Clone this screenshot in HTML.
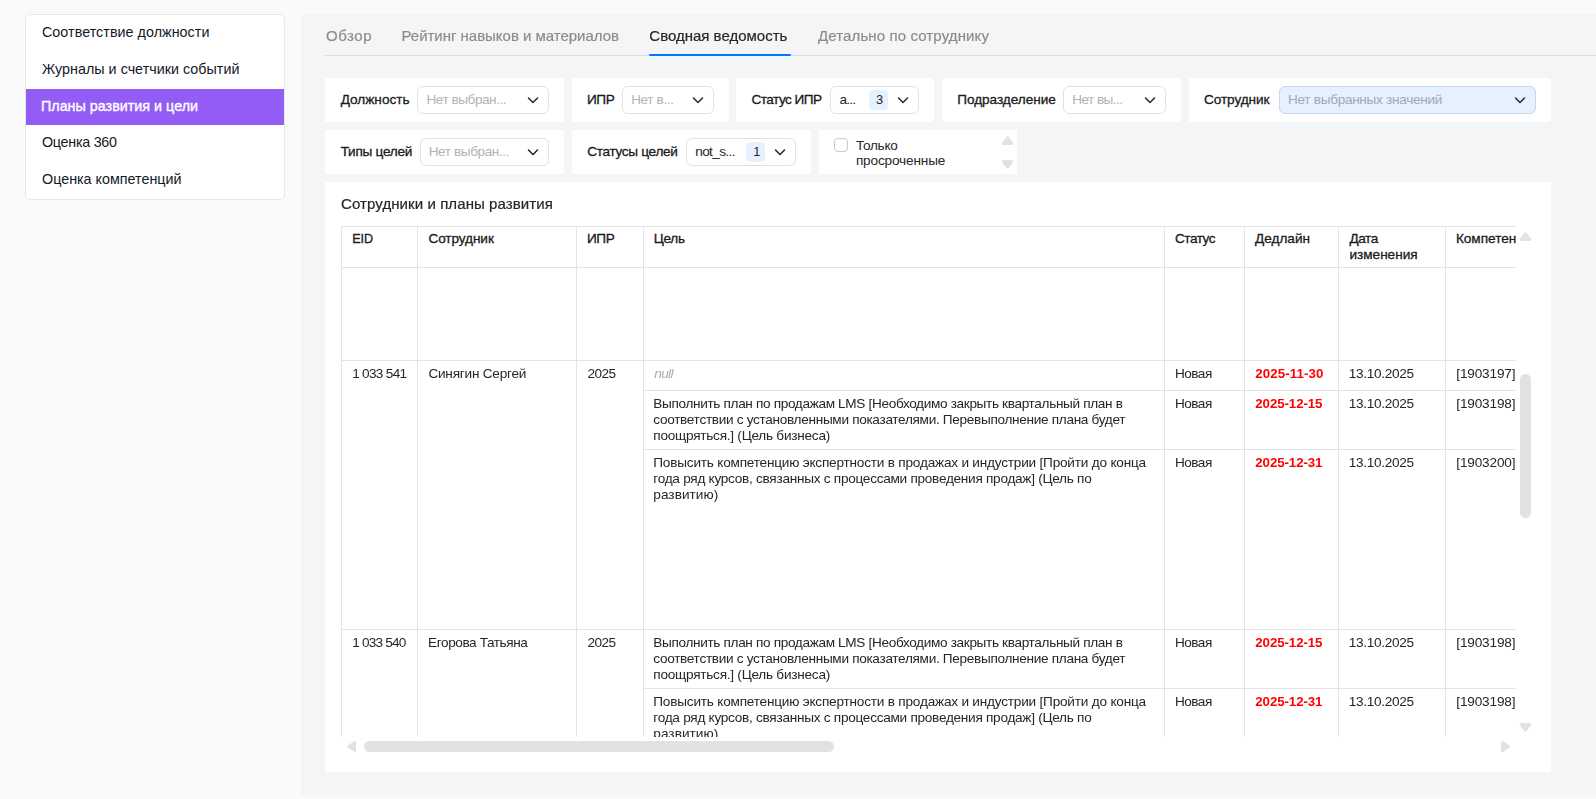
<!DOCTYPE html>
<html lang="ru">
<head>
<meta charset="utf-8">
<title>Планы развития и цели</title>
<style>
html,body{margin:0;padding:0;}
body{width:1596px;height:799px;overflow:hidden;background:#f9fafb;position:relative;font-family:"Liberation Sans",sans-serif;}
.b{position:absolute;box-sizing:border-box;display:block;}
.t{position:absolute;white-space:nowrap;line-height:20px;height:20px;}
.g{position:absolute;left:0;top:0;width:1596px;height:799px;will-change:transform;}
</style>
</head>
<body>
<div class="b" style="left:0px;top:0px;width:1px;height:799px;background:#ffffff;"></div>
<div class="b" style="left:1px;top:0px;width:1px;height:799px;background:#f5f6f8;"></div>
<div class="b" style="left:301px;top:14px;width:1295px;height:781px;background:#f4f5f7;"></div>
<div class="b" style="left:25px;top:14px;width:260px;height:186px;background:#fff;border:1px solid #e5e7eb;border-radius:5px;"></div>
<div class="b" style="left:26px;top:89px;width:258px;height:35.7px;background:#935cf5;"></div>
<div class="b" style="left:325px;top:55px;width:1271px;height:1px;background:#dcdddf;"></div>
<div class="b" style="left:649px;top:54px;width:142px;height:2px;background:#0077ff;border-radius:1px;"></div>
<div class="b" style="left:325px;top:78px;width:239px;height:44px;background:#fff;border-radius:3px;"></div>
<div class="b" style="left:572px;top:78px;width:156.5px;height:44px;background:#fff;border-radius:3px;"></div>
<div class="b" style="left:735.5px;top:78px;width:198px;height:44px;background:#fff;border-radius:3px;"></div>
<div class="b" style="left:942px;top:78px;width:238.5px;height:44px;background:#fff;border-radius:3px;"></div>
<div class="b" style="left:1188.5px;top:78px;width:362px;height:44px;background:#fff;border-radius:3px;"></div>
<div class="b" style="left:325px;top:130px;width:239px;height:44px;background:#fff;border-radius:3px;"></div>
<div class="b" style="left:572px;top:130px;width:239px;height:44px;background:#fff;border-radius:3px;"></div>
<div class="b" style="left:819px;top:130px;width:198px;height:44px;background:#fff;border-radius:3px 0 0 3px;"></div>
<div class="b" style="left:417px;top:86px;width:132px;height:28px;background:#fff;border:1px solid #e2e2e2;border-radius:6px;"></div>
<div class="b" style="left:622px;top:86px;width:91.5px;height:28px;background:#fff;border:1px solid #e2e2e2;border-radius:6px;"></div>
<div class="b" style="left:830px;top:86px;width:89px;height:28px;background:#fff;border:1px solid #e2e2e2;border-radius:6px;"></div>
<div class="b" style="left:1063px;top:86px;width:102.5px;height:28px;background:#fff;border:1px solid #e2e2e2;border-radius:6px;"></div>
<div class="b" style="left:1279px;top:86px;width:256.5px;height:28px;background:#e5f1fe;border:1px solid #c6d7e8;border-radius:6px;"></div>
<div class="b" style="left:420px;top:138px;width:129px;height:28px;background:#fff;border:1px solid #e2e2e2;border-radius:6px;"></div>
<div class="b" style="left:686px;top:138px;width:109.5px;height:28px;background:#fff;border:1px solid #e2e2e2;border-radius:6px;"></div>
<svg class="b" style="left:524.85px;top:91.65px" width="16" height="16" viewBox="0 0 16 16"><path fill="#262626" fill-rule="evenodd" clip-rule="evenodd" d="M2.97 5.47a.75.75 0 0 1 1.06 0L8 9.44l3.97-3.97a.75.75 0 1 1 1.06 1.06l-4.5 4.5a.75.75 0 0 1-1.06 0l-4.5-4.5a.75.75 0 0 1 0-1.06Z"/></svg>
<svg class="b" style="left:689.65px;top:91.65px" width="16" height="16" viewBox="0 0 16 16"><path fill="#262626" fill-rule="evenodd" clip-rule="evenodd" d="M2.97 5.47a.75.75 0 0 1 1.06 0L8 9.44l3.97-3.97a.75.75 0 1 1 1.06 1.06l-4.5 4.5a.75.75 0 0 1-1.06 0l-4.5-4.5a.75.75 0 0 1 0-1.06Z"/></svg>
<svg class="b" style="left:895.35px;top:91.65px" width="16" height="16" viewBox="0 0 16 16"><path fill="#262626" fill-rule="evenodd" clip-rule="evenodd" d="M2.97 5.47a.75.75 0 0 1 1.06 0L8 9.44l3.97-3.97a.75.75 0 1 1 1.06 1.06l-4.5 4.5a.75.75 0 0 1-1.06 0l-4.5-4.5a.75.75 0 0 1 0-1.06Z"/></svg>
<svg class="b" style="left:1141.65px;top:91.65px" width="16" height="16" viewBox="0 0 16 16"><path fill="#262626" fill-rule="evenodd" clip-rule="evenodd" d="M2.97 5.47a.75.75 0 0 1 1.06 0L8 9.44l3.97-3.97a.75.75 0 1 1 1.06 1.06l-4.5 4.5a.75.75 0 0 1-1.06 0l-4.5-4.5a.75.75 0 0 1 0-1.06Z"/></svg>
<svg class="b" style="left:1511.65px;top:91.65px" width="16" height="16" viewBox="0 0 16 16"><path fill="#262626" fill-rule="evenodd" clip-rule="evenodd" d="M2.97 5.47a.75.75 0 0 1 1.06 0L8 9.44l3.97-3.97a.75.75 0 1 1 1.06 1.06l-4.5 4.5a.75.75 0 0 1-1.06 0l-4.5-4.5a.75.75 0 0 1 0-1.06Z"/></svg>
<svg class="b" style="left:524.85px;top:143.65px" width="16" height="16" viewBox="0 0 16 16"><path fill="#262626" fill-rule="evenodd" clip-rule="evenodd" d="M2.97 5.47a.75.75 0 0 1 1.06 0L8 9.44l3.97-3.97a.75.75 0 1 1 1.06 1.06l-4.5 4.5a.75.75 0 0 1-1.06 0l-4.5-4.5a.75.75 0 0 1 0-1.06Z"/></svg>
<svg class="b" style="left:771.65px;top:143.65px" width="16" height="16" viewBox="0 0 16 16"><path fill="#262626" fill-rule="evenodd" clip-rule="evenodd" d="M2.97 5.47a.75.75 0 0 1 1.06 0L8 9.44l3.97-3.97a.75.75 0 1 1 1.06 1.06l-4.5 4.5a.75.75 0 0 1-1.06 0l-4.5-4.5a.75.75 0 0 1 0-1.06Z"/></svg>
<div class="b" style="left:869px;top:90px;width:19px;height:20px;background:#e5f1fe;border-radius:4px;"></div>
<div class="b" style="left:745.5px;top:142px;width:19px;height:20px;background:#e5f1fe;border-radius:4px;"></div>
<div class="b" style="left:834px;top:138px;width:14px;height:14px;background:#fff;border:1px solid #c9c9c9;border-radius:4px;"></div>
<svg class="b" style="left:1000.8px;top:136px" width="13" height="9" viewBox="0 0 13 9"><polygon points="2.4,7.5 6.5,1.95 10.6,7.5" fill="#e2e2e2" stroke="#e2e2e2" stroke-width="3" stroke-linejoin="round"/></svg>
<svg class="b" style="left:1000.8px;top:160px" width="13" height="9" viewBox="0 0 13 9"><polygon points="2.4,1.5 10.6,1.5 6.5,7.05" fill="#e2e2e2" stroke="#e2e2e2" stroke-width="3" stroke-linejoin="round"/></svg>
<div class="b" style="left:325px;top:182px;width:1226px;height:590px;background:#fff;"></div>
<div class="b" style="left:341px;top:226px;width:1175px;height:1px;background:#e4e4e4;"></div>
<div class="b" style="left:341px;top:267px;width:1175px;height:1px;background:#e4e4e4;"></div>
<div class="b" style="left:341px;top:360px;width:1175px;height:1px;background:#e4e4e4;"></div>
<div class="b" style="left:643px;top:390px;width:873px;height:1px;background:#e4e4e4;"></div>
<div class="b" style="left:643px;top:449px;width:873px;height:1px;background:#e4e4e4;"></div>
<div class="b" style="left:341px;top:629px;width:1175px;height:1px;background:#e4e4e4;"></div>
<div class="b" style="left:643px;top:688px;width:873px;height:1px;background:#e4e4e4;"></div>
<div class="b" style="left:341px;top:226px;width:1px;height:511px;background:#e4e4e4;"></div>
<div class="b" style="left:417px;top:226px;width:1px;height:511px;background:#e4e4e4;"></div>
<div class="b" style="left:576px;top:226px;width:1px;height:511px;background:#e4e4e4;"></div>
<div class="b" style="left:643px;top:226px;width:1px;height:511px;background:#e4e4e4;"></div>
<div class="b" style="left:1164px;top:226px;width:1px;height:511px;background:#e4e4e4;"></div>
<div class="b" style="left:1244px;top:226px;width:1px;height:511px;background:#e4e4e4;"></div>
<div class="b" style="left:1338px;top:226px;width:1px;height:511px;background:#e4e4e4;"></div>
<div class="b" style="left:1445px;top:226px;width:1px;height:511px;background:#e4e4e4;"></div>
<span class="t" style="left:42.00px;top:22px;font-size:14.3px;color:#111827;letter-spacing:0.048px;">Соответствие должности</span>
<span class="t" style="left:42.00px;top:59px;font-size:14.3px;color:#111827;letter-spacing:0.026px;">Журналы и счетчики событий</span>
<span class="t" style="left:41.00px;top:96px;font-size:14.3px;color:#ffffff;-webkit-text-stroke:0.35px #ffffff;letter-spacing:0.018px;">Планы развития и цели</span>
<span class="t" style="left:42.00px;top:132px;font-size:14.3px;color:#111827;letter-spacing:-0.266px;">Оценка 360</span>
<span class="t" style="left:42.00px;top:169px;font-size:14.3px;color:#111827;letter-spacing:0.011px;">Оценка компетенций</span>
<span class="t" style="left:340.70px;top:90px;font-size:13.6px;color:#1a1a1a;-webkit-text-stroke:0.3px #1a1a1a;letter-spacing:0.008px;">Должность</span>
<span class="t" style="left:586.90px;top:90px;font-size:13.6px;color:#1a1a1a;-webkit-text-stroke:0.3px #1a1a1a;letter-spacing:-0.371px;">ИПР</span>
<span class="t" style="left:751.50px;top:90px;font-size:13.6px;color:#1a1a1a;-webkit-text-stroke:0.3px #1a1a1a;letter-spacing:-0.532px;">Статус ИПР</span>
<span class="t" style="left:957.20px;top:90px;font-size:13.6px;color:#1a1a1a;-webkit-text-stroke:0.3px #1a1a1a;letter-spacing:-0.042px;">Подразделение</span>
<span class="t" style="left:1204.00px;top:90px;font-size:13.6px;color:#1a1a1a;-webkit-text-stroke:0.3px #1a1a1a;letter-spacing:-0.061px;">Сотрудник</span>
<span class="t" style="left:426.50px;top:90px;font-size:13.6px;color:#b3b3b3;letter-spacing:-0.474px;">Нет выбран...</span>
<span class="t" style="left:631.20px;top:90px;font-size:13.6px;color:#b3b3b3;letter-spacing:-0.386px;">Нет в...</span>
<span class="t" style="left:839.50px;top:90px;font-size:13.6px;color:#262626;letter-spacing:-0.805px;">a...</span>
<span class="t" style="left:875.90px;top:90px;font-size:12.8px;color:#262626;">3</span>
<span class="t" style="left:1072.20px;top:90px;font-size:13.6px;color:#b3b3b3;letter-spacing:-0.559px;">Нет вы...</span>
<span class="t" style="left:1288.00px;top:90px;font-size:13.6px;color:#a3a9b3;letter-spacing:-0.297px;">Нет выбранных значений</span>
<span class="t" style="left:340.70px;top:142px;font-size:13.6px;color:#1a1a1a;-webkit-text-stroke:0.3px #1a1a1a;letter-spacing:-0.271px;">Типы целей</span>
<span class="t" style="left:428.70px;top:142px;font-size:13.6px;color:#b3b3b3;letter-spacing:-0.407px;">Нет выбран...</span>
<span class="t" style="left:587.20px;top:142px;font-size:13.6px;color:#1a1a1a;-webkit-text-stroke:0.3px #1a1a1a;letter-spacing:-0.304px;">Статусы целей</span>
<span class="t" style="left:695.20px;top:142px;font-size:13.6px;color:#262626;letter-spacing:-0.615px;">not_s...</span>
<span class="t" style="left:753.20px;top:142px;font-size:12.8px;color:#262626;">1</span>
<span class="t" style="left:855.90px;top:136px;font-size:13.6px;color:#262626;letter-spacing:-0.243px;">Только</span>
<span class="t" style="left:855.90px;top:151px;font-size:13.6px;color:#262626;letter-spacing:-0.148px;">просроченные</span>
<span class="t" style="left:352.20px;top:229px;font-size:12.6px;color:#1a1a1a;-webkit-text-stroke:0.3px #1a1a1a;letter-spacing:-0.049px;">EID</span>
<span class="t" style="left:428.40px;top:229px;font-size:13.6px;color:#1a1a1a;-webkit-text-stroke:0.3px #1a1a1a;letter-spacing:-0.074px;">Сотрудник</span>
<span class="t" style="left:586.90px;top:229px;font-size:13.6px;color:#1a1a1a;-webkit-text-stroke:0.3px #1a1a1a;letter-spacing:-0.371px;">ИПР</span>
<span class="t" style="left:653.80px;top:229px;font-size:13.6px;color:#1a1a1a;-webkit-text-stroke:0.3px #1a1a1a;letter-spacing:-0.299px;">Цель</span>
<span class="t" style="left:1175.00px;top:229px;font-size:13.6px;color:#1a1a1a;-webkit-text-stroke:0.3px #1a1a1a;letter-spacing:-0.495px;">Статус</span>
<span class="t" style="left:1255.00px;top:229px;font-size:13.6px;color:#1a1a1a;-webkit-text-stroke:0.3px #1a1a1a;">Дедлайн</span>
<span class="t" style="left:1349.50px;top:229px;font-size:13.6px;color:#1a1a1a;-webkit-text-stroke:0.3px #1a1a1a;letter-spacing:-0.447px;">Дата</span>
<span class="t" style="left:1349.50px;top:245px;font-size:13.6px;color:#1a1a1a;-webkit-text-stroke:0.3px #1a1a1a;letter-spacing:-0.025px;">изменения</span>
<span class="t" style="left:1455.90px;top:229px;font-size:13.6px;color:#1a1a1a;-webkit-text-stroke:0.3px #1a1a1a;width:60.10px;overflow:hidden;">Компетенция</span>
<div class="g">
<span class="t" style="left:326.00px;top:26px;font-size:15px;color:#8c8c8c;-webkit-text-stroke:0.2px #8c8c8c;letter-spacing:0.555px;">Обзор</span>
<span class="t" style="left:401.50px;top:26px;font-size:15px;color:#8c8c8c;-webkit-text-stroke:0.2px #8c8c8c;letter-spacing:-0.021px;">Рейтинг навыков и материалов</span>
<span class="t" style="left:649.30px;top:26px;font-size:15px;color:#262626;-webkit-text-stroke:0.2px #262626;">Сводная ведомость</span>
<span class="t" style="left:818.00px;top:26px;font-size:15px;color:#8c8c8c;-webkit-text-stroke:0.2px #8c8c8c;letter-spacing:0.118px;">Детально по сотруднику</span>
<span class="t" style="left:341.10px;top:194px;font-size:15px;color:#262626;-webkit-text-stroke:0.2px #262626;letter-spacing:0.085px;">Сотрудники и планы развития</span>
<span class="t" style="left:352.20px;top:364px;font-size:13.6px;color:#262626;letter-spacing:-0.702px;">1 033 541</span>
<span class="t" style="left:428.40px;top:364px;font-size:13.6px;color:#262626;letter-spacing:-0.221px;">Синягин Сергей</span>
<span class="t" style="left:587.50px;top:364px;font-size:13.6px;color:#262626;letter-spacing:-0.594px;">2025</span>
<span class="t" style="left:654.30px;top:364px;font-size:13.6px;color:#adadad;font-style:italic;letter-spacing:-0.647px;">null</span>
<span class="t" style="left:1174.90px;top:364px;font-size:13.6px;color:#262626;letter-spacing:-0.502px;">Новая</span>
<span class="t" style="left:1255.30px;top:364px;font-size:13.3px;color:#ff0000;font-weight:700;letter-spacing:0.101px;">2025-11-30</span>
<span class="t" style="left:1348.70px;top:364px;font-size:13.6px;color:#262626;letter-spacing:-0.297px;">13.10.2025</span>
<span class="t" style="left:1456.30px;top:364px;font-size:13.6px;color:#262626;letter-spacing:-0.162px;">[1903197]</span>
<span class="t" style="left:653.30px;top:394px;font-size:13.6px;color:#262626;letter-spacing:-0.335px;">Выполнить план по продажам LMS [Необходимо закрыть квартальный план в</span>
<span class="t" style="left:653.30px;top:410px;font-size:13.6px;color:#262626;letter-spacing:-0.308px;">соответствии с установленными показателями. Перевыполнение плана будет</span>
<span class="t" style="left:653.30px;top:426px;font-size:13.6px;color:#262626;letter-spacing:-0.244px;">поощряться.] (Цель бизнеса)</span>
<span class="t" style="left:1174.90px;top:394px;font-size:13.6px;color:#262626;letter-spacing:-0.502px;">Новая</span>
<span class="t" style="left:1255.30px;top:394px;font-size:13.3px;color:#ff0000;font-weight:700;letter-spacing:-0.091px;">2025-12-15</span>
<span class="t" style="left:1348.70px;top:394px;font-size:13.6px;color:#262626;letter-spacing:-0.297px;">13.10.2025</span>
<span class="t" style="left:1456.30px;top:394px;font-size:13.6px;color:#262626;letter-spacing:-0.162px;">[1903198]</span>
<span class="t" style="left:653.30px;top:453px;font-size:13.6px;color:#262626;letter-spacing:-0.206px;">Повысить компетенцию экспертности в продажах и индустрии [Пройти до конца</span>
<span class="t" style="left:653.30px;top:469px;font-size:13.6px;color:#262626;letter-spacing:-0.266px;">года ряд курсов, связанных с процессами проведения продаж] (Цель по</span>
<span class="t" style="left:653.30px;top:485px;font-size:13.6px;color:#262626;letter-spacing:0.046px;">развитию)</span>
<span class="t" style="left:1174.90px;top:453px;font-size:13.6px;color:#262626;letter-spacing:-0.502px;">Новая</span>
<span class="t" style="left:1255.30px;top:453px;font-size:13.3px;color:#ff0000;font-weight:700;letter-spacing:-0.091px;">2025-12-31</span>
<span class="t" style="left:1348.70px;top:453px;font-size:13.6px;color:#262626;letter-spacing:-0.297px;">13.10.2025</span>
<span class="t" style="left:1456.30px;top:453px;font-size:13.6px;color:#262626;letter-spacing:-0.162px;">[1903200]</span>
<span class="t" style="left:352.20px;top:633px;font-size:13.6px;color:#262626;letter-spacing:-0.789px;">1 033 540</span>
<span class="t" style="left:428.10px;top:633px;font-size:13.6px;color:#262626;letter-spacing:-0.410px;">Егорова Татьяна</span>
<span class="t" style="left:587.50px;top:633px;font-size:13.6px;color:#262626;letter-spacing:-0.594px;">2025</span>
<span class="t" style="left:653.30px;top:633px;font-size:13.6px;color:#262626;letter-spacing:-0.335px;">Выполнить план по продажам LMS [Необходимо закрыть квартальный план в</span>
<span class="t" style="left:653.30px;top:649px;font-size:13.6px;color:#262626;letter-spacing:-0.308px;">соответствии с установленными показателями. Перевыполнение плана будет</span>
<span class="t" style="left:653.30px;top:665px;font-size:13.6px;color:#262626;letter-spacing:-0.244px;">поощряться.] (Цель бизнеса)</span>
<span class="t" style="left:1174.90px;top:633px;font-size:13.6px;color:#262626;letter-spacing:-0.502px;">Новая</span>
<span class="t" style="left:1255.30px;top:633px;font-size:13.3px;color:#ff0000;font-weight:700;letter-spacing:-0.091px;">2025-12-15</span>
<span class="t" style="left:1348.70px;top:633px;font-size:13.6px;color:#262626;letter-spacing:-0.297px;">13.10.2025</span>
<span class="t" style="left:1456.30px;top:633px;font-size:13.6px;color:#262626;letter-spacing:-0.162px;">[1903198]</span>
<span class="t" style="left:653.30px;top:692px;font-size:13.6px;color:#262626;letter-spacing:-0.206px;">Повысить компетенцию экспертности в продажах и индустрии [Пройти до конца</span>
<span class="t" style="left:653.30px;top:708px;font-size:13.6px;color:#262626;letter-spacing:-0.266px;">года ряд курсов, связанных с процессами проведения продаж] (Цель по</span>
<span class="t" style="left:653.30px;top:724px;font-size:13.6px;color:#262626;letter-spacing:0.046px;">развитию)</span>
<span class="t" style="left:1174.90px;top:692px;font-size:13.6px;color:#262626;letter-spacing:-0.502px;">Новая</span>
<span class="t" style="left:1255.30px;top:692px;font-size:13.3px;color:#ff0000;font-weight:700;letter-spacing:-0.091px;">2025-12-31</span>
<span class="t" style="left:1348.70px;top:692px;font-size:13.6px;color:#262626;letter-spacing:-0.297px;">13.10.2025</span>
<span class="t" style="left:1456.30px;top:692px;font-size:13.6px;color:#262626;letter-spacing:-0.162px;">[1903198]</span>
</div>
<div class="b" style="left:326px;top:737px;width:1225px;height:34px;background:#fff;"></div>
<svg class="b" style="left:1519px;top:232px" width="13" height="9" viewBox="0 0 13 9"><polygon points="2.4,7.5 6.5,1.95 10.6,7.5" fill="#e2e2e2" stroke="#e2e2e2" stroke-width="3" stroke-linejoin="round"/></svg>
<svg class="b" style="left:1519px;top:722.6px" width="13" height="9" viewBox="0 0 13 9"><polygon points="2.4,1.5 10.6,1.5 6.5,7.05" fill="#e2e2e2" stroke="#e2e2e2" stroke-width="3" stroke-linejoin="round"/></svg>
<div class="b" style="left:1520px;top:374px;width:11px;height:144px;background:#e2e2e2;border-radius:5.5px;"></div>
<svg class="b" style="left:346.6px;top:740.2px" width="9.6" height="12.8" viewBox="0 0 9.6 12.8"><polygon points="8.1,2.4 8.1,10.4 1.95,6.4" fill="#e2e2e2" stroke="#e2e2e2" stroke-width="3" stroke-linejoin="round"/></svg>
<svg class="b" style="left:1501.2px;top:740.2px" width="9.6" height="12.8" viewBox="0 0 9.6 12.8"><polygon points="1.5,2.4 7.65,6.4 1.5,10.4" fill="#e2e2e2" stroke="#e2e2e2" stroke-width="3" stroke-linejoin="round"/></svg>
<div class="b" style="left:364px;top:741px;width:470px;height:11px;background:#e2e2e2;border-radius:5.5px;"></div>
</body>
</html>
